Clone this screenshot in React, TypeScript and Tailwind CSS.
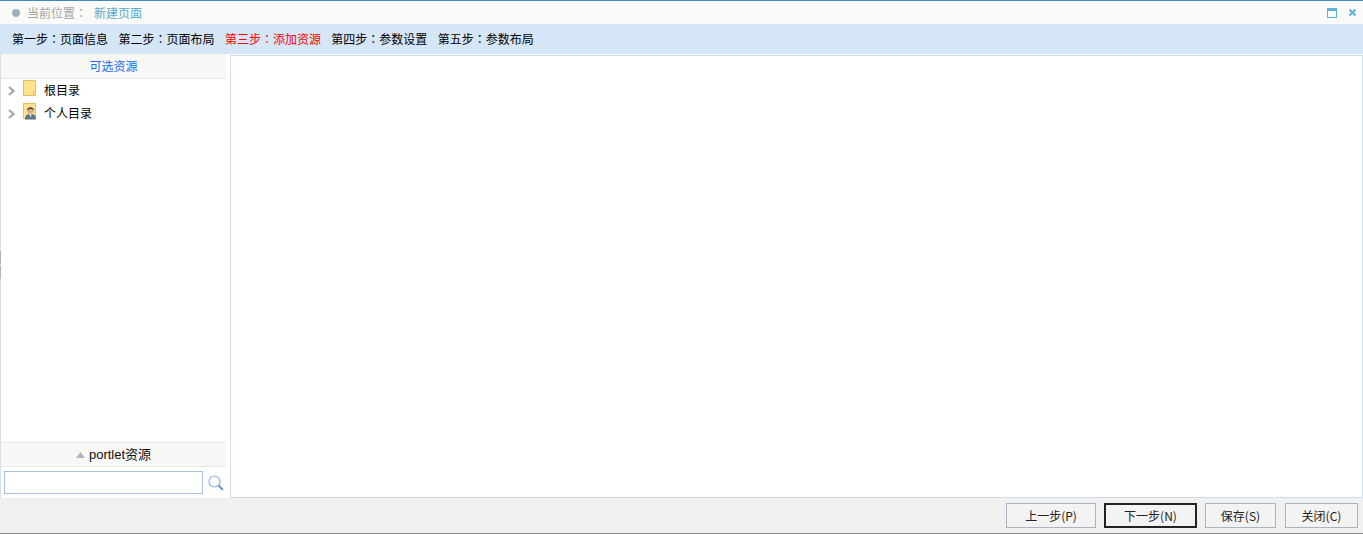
import React from "react";

const font = "font-['Noto_Sans_CJK_SC','Liberation_Sans',sans-serif]";

// Folder icon used in the tree
function FolderIcon({ person }: { person?: boolean }) {
  return (
    <svg width="13" height="17" viewBox="0 0 13 17" className="block">
      <rect x="0.5" y="0.5" width="12" height="15" fill="#fee38f" stroke="#e8c25e" />
      {person ? (
        <g>
          <path d="M2 16.5 C2 12 4.5 11 7.5 11 C10.5 11 13 12 13 16.5 Z" fill="#5f7480" />
          <path d="M6.3 11 L7.5 14.5 L8.7 11 Z" fill="#f0f0f0" />
          <circle cx="7.5" cy="7.5" r="3.3" fill="#e0ae86" />
          <path d="M4 7.5 C3.6 3 11.4 3 11 7.5 C10 5.5 6 5.5 4 7.5 Z" fill="#4a423c" />
        </g>
      ) : (
        <path d="M10.5 16 V11.5 H12.5" fill="none" stroke="#e8c25e" />
      )}
    </svg>
  );
}

function Chevron() {
  return (
    <svg width="7" height="10" viewBox="0 0 7 10" className="mt-[2px] block">
      <path d="M1 1 L5.5 5 L1 9" fill="none" stroke="#a8a8a8" strokeWidth="2.2" />
    </svg>
  );
}

function TreeRow({ label, person }: { label: string; person?: boolean }) {
  return (
    <div className="flex h-[23px] items-center">
      <div className="ml-[7px] w-[15px]">
        <Chevron />
      </div>
      <div className="-mt-[3px] w-[21px]">
        <FolderIcon person={person} />
      </div>
      <span className="text-[12px] text-black">{label}</span>
    </div>
  );
}

function FooterButton({
  children,
  width,
  active,
}: {
  children: React.ReactNode;
  width: string;
  active?: boolean;
}) {
  return (
    <button
      className={`flex h-[25px] items-center justify-center bg-[#f3f3f3] text-[12px] text-[#222] ${width} ${
        active ? "border-2 border-[#222]" : "border border-[#a9b4c0]"
      }`}
    >
      {children}
    </button>
  );
}

// centered colon, as the TC face draws it
function Colon() {
  return <span className="font-['Noto_Sans_CJK_TC',sans-serif]">：</span>;
}

const steps = [
  { name: "第一步", label: "页面信息" },
  { name: "第二步", label: "页面布局" },
  { name: "第三步", label: "添加资源", current: true },
  { name: "第四步", label: "参数设置" },
  { name: "第五步", label: "参数布局" },
];

export default function App() {
  return (
    <div className={`relative flex h-[534px] w-[1363px] flex-col overflow-hidden bg-[#f0f0f0] ${font}`}>
      {/* title bar */}
      <div className="flex h-[24px] shrink-0 items-center border-t border-[#3f87bf] bg-[#fafaf8] pl-[12px] pr-[7px] text-[12px]">
        <span className="h-[8px] w-[8px] rounded-full bg-[#9fb0c0]" />
        <span className="ml-[7px] text-[#a3a3a3]">
          当前位置
          <Colon />
        </span>
        <span className="ml-[7px] text-[#55abcf]">新建页面</span>
        <div className="ml-auto flex items-center gap-[12px]">
          <svg width="10" height="10" viewBox="0 0 10 10" className="block">
            <rect x="0.5" y="0.5" width="9" height="9" fill="none" stroke="#5fb1d8" />
            <rect x="0" y="0" width="10" height="3" fill="#5fb1d8" />
          </svg>
          <svg width="7" height="7" viewBox="0 0 7 7" className="block">
            <path d="M0.5 0.5 L6.5 6.5 M6.5 0.5 L0.5 6.5" stroke="#5fb1d8" strokeWidth="2" />
          </svg>
        </div>
      </div>

      {/* wizard steps */}
      <div className="flex h-[30px] shrink-0 items-center gap-[10.4px] bg-[#d5e6f7] pl-[12px] text-[12px] text-black">
        {steps.map((s) => (
          <span key={s.name} className={s.current ? "text-[#ff0000]" : ""}>
            {s.name}
            <Colon />
            {s.label}
          </span>
        ))}
      </div>

      {/* body */}
      <div className="flex h-[444px] shrink-0 bg-white">
        <div className="flex w-[226px] shrink-0 flex-col border-l border-[#d5dfe8] bg-white">
          <div className="flex h-[25px] shrink-0 items-center justify-center border-b border-[#e8e8e6] bg-[#f8f8f6] text-[12px] text-[#1a6cf0]">
            可选资源
          </div>
          <div className="-mt-[1px] flex-1">
            <TreeRow label="根目录" />
            <TreeRow label="个人目录" person />
          </div>
          <div className="flex h-[25px] shrink-0 items-center justify-center gap-[4px] border-y border-[#e8e8e6] bg-[#f8f8f6] text-[12px] text-[#111]">
            <svg width="9" height="6" viewBox="0 0 9 6" className="block">
              <path d="M4.5 0 L9 6 H0 Z" fill="#b5b5b5" />
            </svg>
            <span className="font-['Liberation_Sans','Noto_Sans_CJK_SC',sans-serif] text-[13px]">portlet资源</span>
          </div>
          <div className="flex h-[31px] shrink-0 items-center pl-[3px]">
            <input className="h-[23px] w-[199px] border border-[#a9c2e2] bg-white outline-none" />
            <svg width="16" height="16" viewBox="0 0 16 16" className="ml-[5px] block">
              <circle cx="6.5" cy="6.5" r="5.5" fill="none" stroke="#8fb0dd" strokeWidth="1.2" />
              <path d="M10.5 10.5 L15 15" stroke="#6f97d2" strokeWidth="2" />
            </svg>
          </div>
        </div>
        <div className="flex flex-1 pl-[4px] pt-[1px]">
          <div className="flex-1 border border-[#d0dde9] bg-white" />
        </div>
      </div>

      {/* footer */}
      <div className="flex flex-1 items-center justify-end gap-[8px] border-b border-[#8a8a8a] pr-[5px]">
        <FooterButton width="w-[90px]">上一步(P)</FooterButton>
        <FooterButton width="w-[93px]" active>
          下一步(N)
        </FooterButton>
        <FooterButton width="w-[71px]">保存(S)</FooterButton>
        <FooterButton width="w-[73px] ml-[1px]">关闭(C)</FooterButton>
      </div>

      {/* splitter grip on the left edge */}
      <div className="absolute left-0 top-[251px] h-[13px] w-[1px] bg-[#b4b4b4]" />
      <div className="absolute left-0 top-[266px] h-[13px] w-[1px] bg-[#b4b4b4]" />
    </div>
  );
}
